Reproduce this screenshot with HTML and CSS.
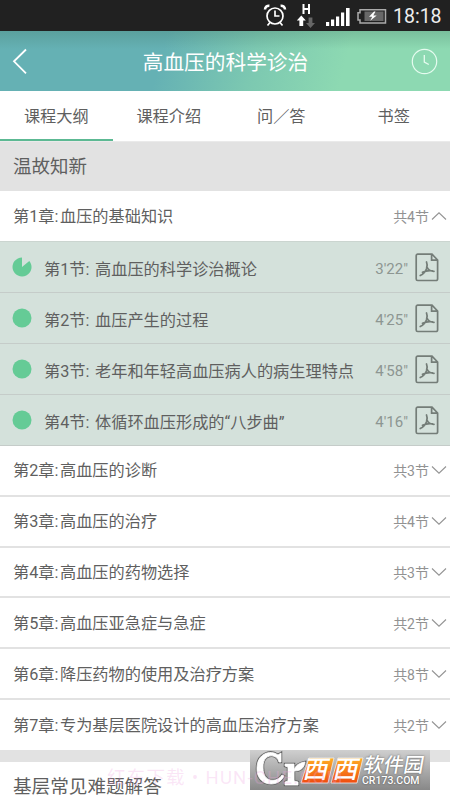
FILE: index.html
```html
<!DOCTYPE html>
<html lang="zh-CN">
<head>
<meta charset="utf-8">
<title>高血压的科学诊治</title>
<link rel="stylesheet" href="styles.css">
</head>
<body>
<svg class="defs" width="0" height="0">
  <symbol id="pdf" viewBox="0 0 24 29"><path d="M2.700 1.200H17l5.600 5.800v19a1.500 1.500 0 0 1-1.500 1.500H2.700a1.500 1.500 0 0 1-1.500-1.500V2.700a1.500 1.500 0 0 1 1.500-1.500zM16.600 1.500v5.600h5.800" fill="none" stroke="#747d78" stroke-width="1.700"/><path d="M11.500 9c.9 1.700.6 4.500 0 6.700-1 3-3.200 5.400-6.300 6.800M12 14c.8 2.500 3 4.300 7 4.300M7.500 19.300c3-1.500 6-1.900 10-1.500" fill="none" stroke="#747d78" stroke-width="1.700" stroke-linecap="round"/></symbol>
  <symbol id="down" viewBox="0 0 16 10"><path d="M1 1.500l7 6.700 7-6.700" fill="none" stroke="#949494" stroke-width="1.100"/></symbol>
  <symbol id="dot" viewBox="0 0 20 20"><circle cx="10" cy="10" r="9.500" fill="#65cb96"/></symbol>
</svg>
<div class="screen">
  <div class="status">
    <svg class="status-icons" width="124" height="31" viewBox="0 0 124 31" fill="none">
      <g stroke="#fff" stroke-width="1.700"><circle cx="12" cy="16" r="8"/><path d="M12 10.500V16h4.500M7 22.500l-2.500 3M17 22.500l2.500 3"/><path d="M2 9.500c.2-2.500 2-4 4.400-3.800M22 9.500c-.2-2.500-2-4-4.400-3.800" stroke-width="2.600"/></g>
      <path d="M40.500 4v10M46 4v10M40 9h6" stroke="#fff" stroke-width="2"/>
      <path d="M38.300 15.500l4.500 5h-2.600v5.500h-3.800v-5.500h-2.600z" fill="#fff"/><path d="M47.500 28l4.500-5h-2.600v-5.500h-3.800V23H43z" fill="#666"/>
      <path d="M63 22h3.200v4H63zM68 19.500h3.200V26H68zM73 16.500h3.200V26H73zM78 12.500h3.200V26H78zM83 8h3.600v18H83z" fill="#fff"/>
      <path d="M97 9.700h25.500v13.200H97v-3h-2v-7.200h2z" stroke="#aaa" stroke-width="1.500"/><path d="M101.500 11.500h19v9.500h-19z" fill="#686868"/><path d="M111 11.500l-5 5.300h3.200l-2 4 6.500-5.300h-3.400l2.200-4z" fill="#fff"/>
    </svg>
    <span class="clock">18:18</span>
  </div>
  <header class="header">
    <svg class="back" width="16" height="27" viewBox="0 0 16 27"><path d="M14 1.500L2 13.300l12 12" fill="none" stroke="#fff" stroke-width="1.800"/></svg>
    <h1>高血压的科学诊治</h1>
    <svg class="history" width="27" height="27" viewBox="0 0 27 27" fill="none" stroke="#e5fbef"><circle cx="13.500" cy="13.500" r="12.200" stroke-width="1.200"/><path d="M13.300 7v7l4.500 2.500" stroke-width="1.300"/></svg>
  </header>
  <nav class="tabs"><span class="tab active">课程大纲</span><span class="tab">课程介绍</span><span class="tab">问／答</span><span class="tab">书签</span></nav>
  <h2 class="group">温故知新</h2>
  <div class="row chapter open"><span class="name">第1章:<b>血压的基础知识</b></span><span class="count">共4节</span><svg class="arrow up"><use href="#down"/></svg></div>
  <div class="lessons">
    <div class="row lesson"><svg class="dot" viewBox="0 0 20 20"><path d="M10 10V.5A9.500 9.500 0 1 0 17.300 3.900z" fill="#65cb96"/></svg><span class="name">第1节: <b>高血压的科学诊治概论</b></span><span class="time">3'22"</span><svg class="pdf"><use href="#pdf"/></svg></div>
    <div class="row lesson"><svg class="dot"><use href="#dot"/></svg><span class="name">第2节: <b>血压产生的过程</b></span><span class="time">4'25"</span><svg class="pdf"><use href="#pdf"/></svg></div>
    <div class="row lesson"><svg class="dot"><use href="#dot"/></svg><span class="name">第3节: <b>老年和年轻高血压病人的病生理特点</b></span><span class="time">4'58"</span><svg class="pdf"><use href="#pdf"/></svg></div>
    <div class="row lesson"><svg class="dot"><use href="#dot"/></svg><span class="name">第4节: <b>体循环血压形成的“八步曲”</b></span><span class="time">4'16"</span><svg class="pdf"><use href="#pdf"/></svg></div>
  </div>
  <div class="row chapter"><span class="name">第2章:<b>高血压的诊断</b></span><span class="count">共3节</span><svg class="arrow"><use href="#down"/></svg></div>
  <div class="row chapter"><span class="name">第3章:<b>高血压的治疗</b></span><span class="count">共4节</span><svg class="arrow"><use href="#down"/></svg></div>
  <div class="row chapter"><span class="name">第4章:<b>高血压的药物选择</b></span><span class="count">共3节</span><svg class="arrow"><use href="#down"/></svg></div>
  <div class="row chapter"><span class="name">第5章:<b>高血压亚急症与急症</b></span><span class="count">共2节</span><svg class="arrow"><use href="#down"/></svg></div>
  <div class="row chapter"><span class="name">第6章:<b>降压药物的使用及治疗方案</b></span><span class="count">共8节</span><svg class="arrow"><use href="#down"/></svg></div>
  <div class="row chapter last"><span class="name">第7章:<b>专为基层医院设计的高血压治疗方案</b></span><span class="count">共2节</span><svg class="arrow"><use href="#down"/></svg></div>
  <div class="gap"></div>
  <h2 class="next">基层常见难题解答</h2>
  <div class="stamp">
    <svg width="180" height="40" viewBox="0 0 180 40">
      <defs>
        <linearGradient id="orange" x2="0" y2="1"><stop stop-color="#ffae23"/><stop offset="1" stop-color="#ef4b10"/></linearGradient>
        <g id="emblem"><path d="M31 3v9h-2C27 3 12 3 13 18c0 15 14 15 19 7l2 1C28 39 6 36 7 18 7 4 20-1 28 5zM35 14h9v6c2-5 5-7 11-8-1 6-4 9-11 9v10l4 1v3H35v-3l3-1V17l-3-1z"/></g>
      </defs>
      <use href="#emblem" fill="#555" stroke="#666" stroke-width="2.500"/><use href="#emblem" fill="#fff" stroke="#fff" stroke-width=".8"/>
      <path d="M59 8h25l-6 25H51zM88 8h25l-6 25H81z" fill="url(#orange)" stroke="#eee" stroke-width=".8"/>
    </svg>
    <span class="stamp-west">西西</span><span class="stamp-cn">软件园</span><span class="stamp-en">CR173.COM</span>
  </div>
  <div class="mark">红东下载・HUN-CHE.COM</div>
</div>
</body>
</html>
```
FILE: styles.css
```css
* { box-sizing: border-box; }
body { margin: 0; background: #fff; font-family: Roboto, "Noto Sans CJK SC", sans-serif; color: #5f5f5f; }
h1, h2 { margin: 0; font-weight: 400; }
b { font-weight: 400; margin-left: 1.6px; }
.defs { position: absolute; }
.screen { position: relative; width: 450px; height: 800px; overflow: hidden; display: flex; flex-direction: column; }
.screen > * { flex-shrink: 0; }
.status { height: 31px; background: #212121; display: flex; justify-content: flex-end; align-items: center; padding-right: 7px; }
.clock { width: 50px; margin-left: 6px; font-size: 19.5px; line-height: 31px; color: #eee; white-space: nowrap; padding-top: 2px; }
.header { height: 60px; display: flex; align-items: center; padding: 2px 12px 0; color: #fff; background: linear-gradient(180deg, rgba(60,110,90,.25), transparent 18px), linear-gradient(105deg, #65b1b4 0, #65b1b4 36%, #7cc8b1 56%, #8dd9b2 76%, #8dd9b2); }
.header h1 { flex: 1; text-align: center; font-size: 20.7px; line-height: 58px; padding-top: 2px; }
.back { margin: -2px 12px 0 0; }
.history { margin-top: -2px; }
.tabs { height: 51px; display: grid; grid-template-columns: repeat(4, 1fr); border-bottom: 1px solid #eaeaea; background: #fff; }
.tab { text-align: center; font-size: 16.2px; line-height: 51px; height: 51px; }
.tab.active { border-bottom: 2px solid #5cb993; height: 50px; }
.group { height: 49px; line-height: 51px; padding-left: 13px; font-size: 18.5px; background: #e2e2e2; }
.row { display: flex; align-items: center; }
.name { flex: 1; white-space: nowrap; }
.chapter { height: 50.8px; padding: 0 3px 0 13px; font-size: 16.2px; border-bottom: 2px solid #e2e2e2; }
.chapter .name { margin-top: -2px; }
.chapter.open { height: 50px; border-bottom: 0; }
.chapter.last { height: 50px; border-bottom: 0; }
.count { font-size: 14px; color: #929292; }
.arrow { width: 16px; height: 10px; margin-left: 2px; }
.up { transform: scaleY(-1); }
.lessons { background: #d4e1db; border-top: 1px solid #cbd5d0; }
.lesson { height: 51px; padding: 0 11px 0 12px; font-size: 16.2px; border-bottom: 1px solid #c5ccc9; }
.lesson .name { padding-top: 2px; }
.dot { width: 20px; height: 20px; margin-right: 12px; }
.time { font-size: 15px; color: #8d9692; padding-top: 3px; }
.pdf { width: 24px; height: 29px; margin-left: 7px; }
.gap { height: 12px; background: #e2e2e2; }
.next { height: 50px; line-height: 51px; padding-left: 13px; font-size: 18.6px; }
.stamp { position: absolute; left: 250px; top: 750px; width: 180px; height: 40px; background: linear-gradient(#cfcfcf, #888); color: #fff; }
.stamp svg { display: block; }
.stamp-west { position: absolute; left: 54px; top: 5px; font-size: 25px; letter-spacing: 5px; line-height: 30px; font-weight: 500; transform: skewX(-13deg); }
.stamp-cn { position: absolute; left: 114px; top: 3px; font-size: 20px; line-height: 24px; font-weight: 500; transform: skewX(-10deg); text-shadow: 0 0 2px #555; }
.stamp-en { position: absolute; left: 112px; top: 25px; font-size: 10.5px; line-height: 12px; font-weight: 500; text-shadow: 0 0 2px #444; }
.mark { position: absolute; left: 107px; top: 766px; font-size: 18.5px; line-height: 24px; letter-spacing: 1.2px; white-space: nowrap; color: rgba(240, 165, 225, .28); }
```
